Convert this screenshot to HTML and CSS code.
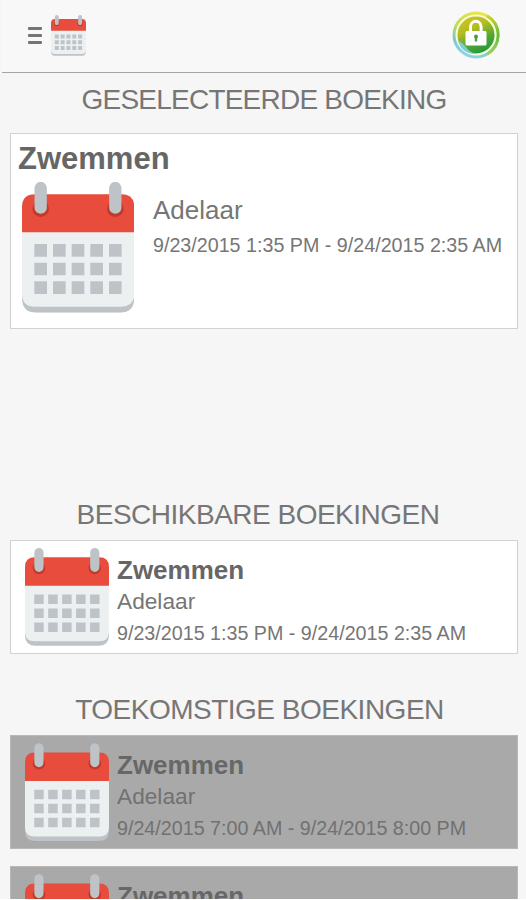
FILE: index.html
```
<!DOCTYPE html>
<html lang="nl">
<head>
<meta charset="utf-8">
<title>Boekingen</title>
<link rel="stylesheet" href="styles.css">
</head>
<body>
<svg class="defs" width="0" height="0" aria-hidden="true">
  <symbol id="calendar" viewBox="67 170 337 392">
    <path d="M67 505h337v17q-2 40-42 40H109q-40 0-42-40z" fill="#bdc3c7"/>
    <path d="M67 310h337v195q0 39-39 39H106q-39 0-39-39z" fill="#ecf0f1"/>
    <path d="M67 321v-75q0-39 39-39h259q39 0 39 39v75z" fill="#e74c3c"/>
    <circle cx="123" cy="250" r="25" fill="#c0392b"/>
    <circle cx="347" cy="250" r="25" fill="#c0392b"/>
    <path d="M123 188v59M347 188v59" stroke="#bdc3c7" stroke-width="37" stroke-linecap="round"/>
    <path d="M123 356v152M179 356v152M235 356v152M291 356v152M347 356v152" fill="none" stroke="#bdc3c7" stroke-width="38" stroke-dasharray="38 18"/>
  </symbol>
</svg>
<div class="screen">
  <header class="topbar">
    <div class="menu"><i></i><i></i><i></i></div>
    <svg class="logo"><use href="#calendar"/></svg>
    <svg class="lock" viewBox="0 0 48 50">
      <defs>
        <linearGradient id="ring" x1=".65" y1="0" x2=".35" y2="1">
          <stop offset="0" stop-color="#ece84e"/><stop offset=".4" stop-color="#c4dc55"/><stop offset=".72" stop-color="#7cc8c8"/><stop offset="1" stop-color="#8ed4f4"/>
        </linearGradient>
        <linearGradient id="side" x1="0" y1="0" x2="0" y2="1">
          <stop offset="0" stop-color="#c8d52e"/><stop offset=".5" stop-color="#65b83c"/><stop offset="1" stop-color="#9ad45c"/>
        </linearGradient>
        <linearGradient id="disc" x1=".2" y1="0" x2=".65" y2="1">
          <stop offset="0" stop-color="#d3c51c"/><stop offset=".35" stop-color="#b4bd20"/><stop offset=".7" stop-color="#4da535"/><stop offset="1" stop-color="#20973c"/>
        </linearGradient>
      </defs>
      <circle cx="24" cy="25" r="23.5" fill="url(#ring)"/>
      <path d="M35 5.900a22 22 0 0 1 0 38.200" fill="none" stroke="url(#side)" stroke-width="3"/>
      <circle cx="24" cy="25" r="19.500" fill="url(#disc)" stroke="#f7fbdc" stroke-width="2"/>
      <path d="M6 31q3 0 8 6q3 5 10 7q-14 0-18-13z" fill="#7ecbd0"/>
      <path d="M18.5 23v-6a5.3 5.8 0 0 1 10.6 0v6" fill="none" stroke="#fff" stroke-width="3"/>
      <rect x="13.500" y="21" width="21" height="14.500" rx="1.5" fill="#fff"/>
      <path d="M22 26.500a2 2 0 1 1 4 0q0 1-.8 1.800v3.200h-2.400v-3.200q-.8-.8-.8-1.800z" fill="#4d9a48"/>
    </svg>
  </header>
  <main>
    <h2 class="first">GESELECTEERDE BOEKING</h2>
    <section class="card selected">
      <h3>Zwemmen</h3>
      <div class="row">
        <svg class="cal"><use href="#calendar"/></svg>
        <div class="info">
          <p class="place">Adelaar</p>
          <p class="date">9/23/2015 1:35 PM - 9/24/2015 2:35 AM</p>
        </div>
      </div>
    </section>
    <h2 class="available">BESCHIKBARE BOEKINGEN</h2>
    <section class="card small">
      <svg class="cal"><use href="#calendar"/></svg>
      <div class="info">
        <h3>Zwemmen</h3>
        <p class="place">Adelaar</p>
        <p class="date">9/23/2015 1:35 PM - 9/24/2015 2:35 AM</p>
      </div>
    </section>
    <h2 class="future">TOEKOMSTIGE BOEKINGEN</h2>
    <section class="card small muted">
      <svg class="cal"><use href="#calendar"/></svg>
      <div class="info">
        <h3>Zwemmen</h3>
        <p class="place">Adelaar</p>
        <p class="date">9/24/2015 7:00 AM - 9/24/2015 8:00 PM</p>
      </div>
    </section>
    <section class="card small muted">
      <svg class="cal"><use href="#calendar"/></svg>
      <div class="info">
        <h3>Zwemmen</h3>
      </div>
    </section>
  </main>
</div>
</body>
</html>
```
FILE: styles.css
```
* { box-sizing: border-box; }
body {
  margin: 0;
  background: #fff;
  color: #767676;
  font-family: "Liberation Sans", Arial, sans-serif;
}
h2, h3, p { margin: 0; }
svg { display: block; flex: none; }
.defs { position: absolute; }
.screen { height: 899px; overflow: hidden; background: #f6f6f6; }
.topbar {
  display: flex;
  align-items: flex-start;
  height: 73px;
  margin-left: 2px;
  padding: 0 26px;
  background: #f8f8f8;
  border-bottom: 1px solid #a5a5a5;
}
.menu {
  display: flex;
  flex-direction: column;
  gap: 4px;
  width: 14px;
  margin-top: 27px;
}
.menu i { height: 3px; background: #747474; border-radius: 1px; }
.logo { width: 35px; height: 41px; margin: 15px 0 0 9px; }
.lock { width: 48px; height: 50px; margin: 10px 0 0 auto; }
main { padding: 0 8px 0 10px; }
h2 {
  height: 34px;
  font-size: 28px;
  line-height: 34px;
  font-weight: 400;
  letter-spacing: -0.5px;
  text-align: center;
  white-space: nowrap;
}
.first { margin: 10px 0 16px; letter-spacing: -0.78px; }
.available { margin: 169px 12px 8px 0; }
.future { margin: 39px 9px 8px 0; }
.card { background: #fff; border: 1px solid #d2d2d2; }
h3 { color: #666; font-weight: 700; }
.date { font-size: 19.7px; line-height: 24px; white-space: nowrap; }
.selected { height: 196px; padding: 7px; }
.selected h3 { height: 36px; font-size: 31px; line-height: 36px; }
.row { display: flex; padding: 5px 0 0 4px; }
.selected .cal { width: 112.300px; height: 130.700px; }
.selected .info { padding: 13px 0 0 18.700px; }
.selected .place { font-size: 26px; line-height: 30px; }
.selected .date { margin-top: 8px; }
.small { display: flex; height: 114px; padding: 7px 0 0 14px; }
.small .cal { width: 84px; height: 98px; }
.small .info { padding: 7px 0 0 8px; }
.small h3 { font-size: 26px; line-height: 30px; }
.small .place { font-size: 22.7px; line-height: 28px; margin-top: 2px; }
.small .date { margin-top: 6px; }
.muted { background: #a9a9a9; border-color: #b9b9b9; margin-bottom: 17px; }
.muted .cal { height: 98.500px; }
.muted h3 { color: #676767; }
.muted .info { color: #717171; }
```
